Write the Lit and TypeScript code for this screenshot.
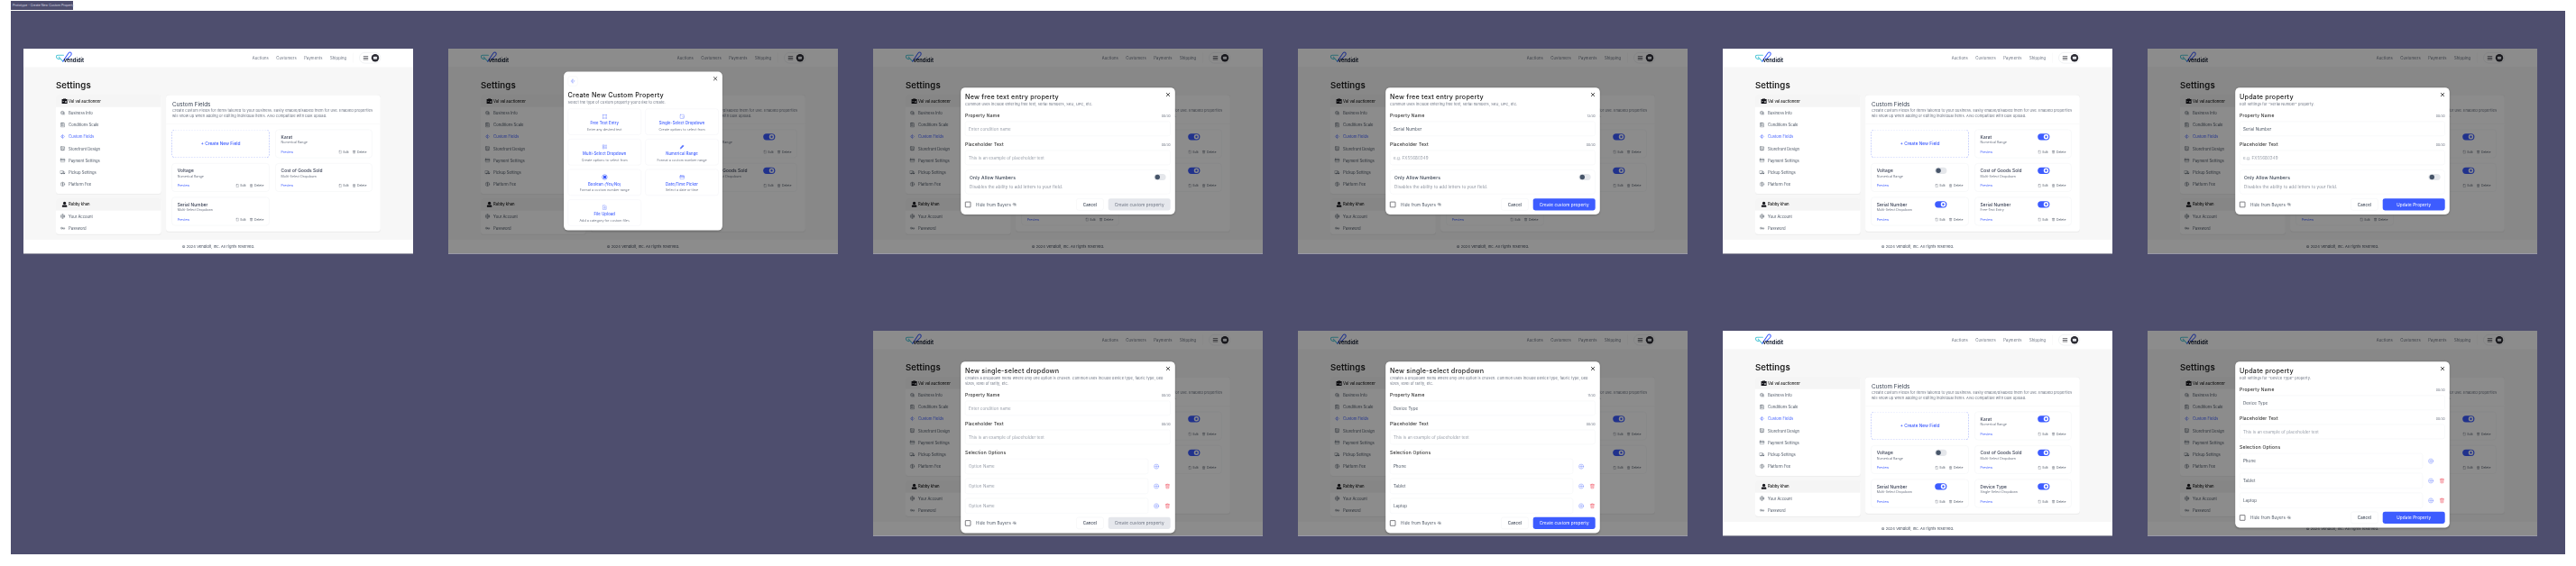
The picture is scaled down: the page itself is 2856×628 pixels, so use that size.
import { LitElement, css, html, nothing, svg } from "lit";
import { customElement } from "lit/decorators.js";

// Each board is laid out at its 1440 design size, then scaled down onto the canvas.
const SCALE = 0.3;

type Tile = { name: string; kind: string; on?: boolean };
type Form = {
  title: string;
  sub: string;
  name: string;
  count: string;
  hint: string;
  options?: string[];
  ready?: boolean;
  action: string;
};
type Board = { x: number; y: number; toggles: boolean; extra?: Tile; picker?: boolean; form?: Form };

const TEXT_SUB = "Common uses include entering free text, serial numbers, SKU, UPC, etc.";
const DROP_SUB =
  "Creates a dropdown menu where only one option is chosen. Common uses include device type, fabric type, bed sizes, level of rarity, etc.";
const SAMPLE = "This is an example of placeholder text";
const SERIAL_HINT = "e.g. FX55680349";
const BLANK_OPTIONS = ["", "", ""];
const DEVICE_OPTIONS = ["Phone", "Tablet", "Laptop"];

const BOARDS: Board[] = [
  { x: 14, y: 42, toggles: false },
  { x: 485, y: 42, toggles: true, picker: true },
  {
    x: 956, y: 42, toggles: true,
    form: { title: "New free text entry property", sub: TEXT_SUB, name: "", count: "00/30", hint: SAMPLE, action: "Create custom property" },
  },
  {
    x: 1427, y: 42, toggles: true,
    form: { title: "New free text entry property", sub: TEXT_SUB, name: "Serial Number", count: "13/30", hint: SERIAL_HINT, ready: true, action: "Create custom property" },
  },
  { x: 1898, y: 42, toggles: true, extra: { name: "Serial Number", kind: "Free-Text Entry", on: true } },
  {
    x: 2369, y: 42, toggles: true,
    form: { title: "Update property", sub: 'Edit settings for "Serial Number" property.', name: "Serial Number", count: "00/30", hint: SERIAL_HINT, ready: true, action: "Update Property" },
  },
  {
    x: 956, y: 355, toggles: true,
    form: { title: "New single-select dropdown", sub: DROP_SUB, name: "", count: "00/30", hint: SAMPLE, options: BLANK_OPTIONS, action: "Create custom property" },
  },
  {
    x: 1427, y: 355, toggles: true,
    form: { title: "New single-select dropdown", sub: DROP_SUB, name: "Device Type", count: "11/30", hint: SAMPLE, options: DEVICE_OPTIONS, ready: true, action: "Create custom property" },
  },
  { x: 1898, y: 355, toggles: true, extra: { name: "Device Type", kind: "Single-Select Dropdown", on: true } },
  {
    x: 2369, y: 355, toggles: true,
    form: { title: "Update property", sub: 'Edit settings for "Device Type" property.', name: "Device Type", count: "00/30", hint: SAMPLE, options: DEVICE_OPTIONS, ready: true, action: "Update Property" },
  },
];

const TILES: Tile[] = [
  { name: "Karat", kind: "Numerical Range", on: true },
  { name: "Voltage", kind: "Numerical Range", on: false },
  { name: "Cost of Goods Sold", kind: "Multi-Select Dropdown", on: true },
  { name: "Serial Number", kind: "Multi-Select Dropdown", on: true },
];

const ICONS: Record<string, unknown> = {
  info: svg`<circle cx="11" cy="11" r="7.5"/><path d="M6 9c3-3 8-3 11 0M8 13h9l4 4-3 3-5-5"/>`,
  scale: svg`<rect x="4" y="4" width="16" height="18" rx="1.5"/><path d="M9 2h6v4H9zM8 11h3v3H8zM13 12h4M8 17h3M13 17h4"/>`,
  fields: svg`<path d="M12 3v18M8.5 7 3.5 12l5 5zM15.5 7l5 5-5 5"/>`,
  store: svg`<rect x="3.5" y="4" width="17" height="16" rx="2"/><path d="M3.5 9h17M8 13h8v7H8z"/>`,
  pay: svg`<rect x="2.5" y="5" width="19" height="14" rx="2"/><path d="M2.5 10h19" stroke-width="3"/>`,
  pickup: svg`<path d="M2 6h13v11H2zM15 10h4l3 3v4h-7z"/><circle cx="7" cy="18" r="2"/><circle cx="18" cy="18" r="2"/>`,
  fee: svg`<circle cx="12" cy="12" r="9"/><path d="M15 9c-1-2-6-2-6 .5s6 2.500 6 5-5 2.500-6 .5M12 5v14"/>`,
  account: svg`<circle cx="12" cy="12" r="9"/><circle cx="12" cy="12" r="3.500"/><path d="M12 3v5M12 16v5M3 12h5M16 12h5"/>`,
  key: svg`<circle cx="7" cy="12" r="4"/><path d="M11 11h11v3h-3v2h-3v-2h-5"/>`,
  edit: svg`<path d="M7 3h11v18H5V5zM9 3v4H5"/>`,
  trash: svg`<path d="M4 6h16M9 6V3h6v3M6 6l1 15h10l1-15M10 10v7M14 10v7"/>`,
  plus: svg`<circle cx="12" cy="12" r="9.500"/><path d="M12 6v12M6 12h12"/>`,
  eyeoff: svg`<path d="M2 12s4-7 10-7 10 7 10 7-4 7-10 7-10-7-10-7zM4 4l16 16"/><circle cx="12" cy="12" r="3"/>`,
  close: svg`<path d="M5 5l14 14M19 5 5 19" stroke-width="3"/>`,
  text: svg`<path d="M5 3v18M3 5h18M19 3v18M3 19h18"/>`,
  select: svg`<rect x="3.500" y="3.500" width="17" height="17" rx="2"/><path d="M14 13l3 3 3-3"/>`,
  multi: svg`<path d="M4 4h6v6H4zM4 14h6v6H4zM14 5h7M14 9h7M14 15h7M14 19h7"/>`,
  range: svg`<path d="M4 20l1-5L16 4l4 4L9 19zM13 7l4 4" fill="currentColor"/>`,
  date: svg`<rect x="3" y="4" width="18" height="17" rx="3"/><path d="M3 10h18" stroke-width="4"/>`,
  file: svg`<path d="M5 3h10l4 4v14H5zM12 17v-7M9 13l3-3 3 3"/>`,
};

const PICKER = [
  ["text", "Free Text Entry", "Enter any desired text"],
  ["select", "Single-Select Dropdown", "Create options to select from"],
  ["multi", "Multi-Select Dropdown", "Create options to select from"],
  ["range", "Numerical Range", "Format a custom number range"],
  ["bool", "Boolean (Yes/No)", "Format a custom number range"],
  ["date", "Date/Time Picker", "Select a date or time"],
  ["file", "File Upload", "Add a category for custom files"],
];

const icon = (name: string, cls = "") =>
  html`<svg class="ico ${cls}" viewBox="0 0 24 24">${ICONS[name]}</svg>`;

@customElement("app-root")
export class AppRoot extends LitElement {
  static styles = css`
    :host {
      display: block;
      width: 2856px;
      height: 628px;
      background: #fff;
      overflow: hidden;
      font-family: Inter, "Noto Sans", sans-serif;
    }
    .tag {
      width: 69px;
      height: 10px;
      margin: 1px 0 1px 12px;
      background: #4e4e6e;
      color: #d8d8e4;
      font-size: 3.500px;
      line-height: 10px;
      white-space: nowrap;
      padding-left: 2px;
      box-sizing: border-box;
    }
    .canvas {
      position: relative;
      height: 603px;
      margin: 0 12px;
      background: #4e4e6e;
    }
    .board {
      position: absolute;
      width: 432px;
      height: 227px;
      overflow: hidden;
      box-shadow: 0 1px 0 #9a9aa8;
      filter: blur(0.3px);
    }
    .page {
      width: 1440px;
      height: 757px;
      display: flex;
      flex-direction: column;
      position: relative;
      background: #f7f7f7;
      transform: scale(${SCALE});
      transform-origin: 0 0;
      color: #374151;
      font-size: 14px;
    }
    .ico {
      width: 20px;
      height: 20px;
      flex: none;
      fill: none;
      stroke: currentColor;
      stroke-width: 1.6;
      stroke-linejoin: round;
      stroke-linecap: round;
    }

    header {
      height: 68px;
      flex: none;
      background: #fff;
      padding: 0 120px;
      display: flex;
      align-items: center;
    }
    .logo {
      position: relative;
      width: 113px;
      height: 46px;
      margin-right: auto;
    }
    .logo svg {
      position: absolute;
      left: 0;
      top: -2px;
    }
    .logo b {
      position: absolute;
      left: 29px;
      top: 18px;
      color: #111a2e;
      font-size: 18.500px;
      line-height: 28px;
      font-weight: 700;
      letter-spacing: 0.2px;
    }
    nav {
      display: flex;
      gap: 28px;
      color: #6b7280;
      letter-spacing: 0.35px;
    }
    .rule {
      width: 1px;
      height: 36px;
      margin: 0 21px 0 25px;
      background: #efefef;
    }
    .pill {
      width: 79px;
      height: 40px;
      box-sizing: border-box;
      border: 1px solid #d1d5db;
      border-radius: 20px;
      display: flex;
      align-items: center;
      justify-content: space-between;
      padding: 0 5px 0 14px;
    }
    .burger {
      width: 18px;
      height: 14px;
      box-sizing: border-box;
      border: solid #2b2b33;
      border-width: 2.500px 0;
      background: linear-gradient(#2b2b33, #2b2b33) center/100% 2.500px no-repeat;
    }
    .avatar {
      width: 28px;
      height: 28px;
      border-radius: 50%;
      background: #2b2b33;
      display: flex;
      align-items: center;
      justify-content: center;
    }
    .avatar i {
      width: 14px;
      height: 10px;
      border-radius: 3px;
      background: #e5e7eb;
    }

    main {
      flex: 1;
      padding: 45px 120px 0;
    }
    h1 {
      margin: 0 0 9px;
      font-size: 32px;
      line-height: 48px;
      font-weight: 600;
      color: #222;
      letter-spacing: 0.3px;
    }
    .cols {
      display: grid;
      grid-template-columns: 389px 792px;
      gap: 18px;
      align-items: start;
    }
    .side {
      display: flex;
      flex-direction: column;
      gap: 16px;
    }
    .menu {
      background: #fff;
      border-radius: 12px;
      overflow: hidden;
      box-shadow: 0 1px 3px #0000000a;
      padding-bottom: 14px;
    }
    .menu.short {
      padding-bottom: 0;
    }
    .who {
      height: 46px;
      background: #f5f5f5;
      display: flex;
      align-items: center;
      padding-left: 20px;
      gap: 3px;
      color: #222;
      font-weight: 500;
    }
    .who svg {
      width: 24px;
      height: 24px;
      flex: none;
      fill: #16161c;
    }
    .item {
      height: 43.800px;
      display: flex;
      align-items: center;
      gap: 12px;
      padding-left: 15px;
      color: #4b5563;
    }
    .item.on {
      color: #3d5cff;
    }

    .panel {
      margin-top: 2px;
      height: 504px;
      background: #fff;
      border-radius: 12px;
      box-shadow: 0 1px 3px #0000000a;
    }
    .intro {
      height: 106px;
      box-sizing: border-box;
      padding: 21px 12px 0 23px;
      border-bottom: 1px solid #eeeeee;
    }
    .intro h2 {
      margin: 0;
      font-size: 21px;
      line-height: 26px;
      font-weight: 400;
      color: #374151;
    }
    .intro p {
      margin: 0;
      font-size: 13.500px;
      line-height: 20px;
      color: #6b7280;
      letter-spacing: 0.2px;
    }
    .tiles {
      display: grid;
      grid-template-columns: 361px 358px;
      grid-auto-rows: 105px;
      gap: 20px 22px;
      padding: 21px 0 0 21px;
    }
    .tile {
      box-sizing: border-box;
      border: 1.500px solid #e7e9ee;
      border-radius: 12px;
      padding: 14px 20px 14px 20px;
      display: grid;
      grid-template-columns: 1fr auto;
      grid-template-rows: 24px 19px 1fr;
    }
    .tile h3 {
      margin: 0;
      font-size: 16px;
      line-height: 24px;
      font-weight: 500;
      color: #3b4256;
      letter-spacing: 0.3px;
    }
    .tile small {
      grid-column: 1 / 3;
      font-size: 12px;
      line-height: 18px;
      color: #6b7280;
    }
    .make {
      border: 2px dashed #a9b6fb;
      display: flex;
      align-items: center;
      justify-content: center;
      color: #3d5cff;
      font-size: 16px;
      font-weight: 500;
    }
    .link {
      color: #3d5cff;
      font-size: 12px;
      align-self: end;
    }
    .acts {
      display: flex;
      justify-content: flex-end;
      gap: 13px;
      font-size: 11.500px;
      color: #4b5563;
      align-self: end;
    }
    .acts span {
      display: flex;
      align-items: center;
      gap: 4px;
    }
    .acts .ico {
      width: 14px;
      height: 14px;
    }
    .switch {
      width: 44px;
      height: 24px;
      box-sizing: border-box;
      border-radius: 12px;
      background: #e5e7eb;
      padding: 3px 4px;
      display: flex;
    }
    .switch i {
      width: 18px;
      height: 18px;
      border-radius: 50%;
      background: #475569;
    }
    .switch.on {
      background: #3d5cff;
      justify-content: flex-end;
    }
    .switch.on i {
      background: #fff;
      box-shadow: inset 0 0 0 5px #fff, inset 0 0 0 9px #3d5cff;
    }

    footer {
      height: 50px;
      flex: none;
      background: #fff;
      display: flex;
      align-items: center;
      justify-content: center;
      font-size: 13.500px;
      color: #374151;
      letter-spacing: 0.2px;
    }

    .shade {
      position: absolute;
      inset: 0;
      background: #00000073;
      display: flex;
      justify-content: center;
      align-items: center;
    }
    .shade.low {
      align-items: flex-start;
      padding-top: 114px;
    }
    .modal {
      position: relative;
      width: 792px;
      box-sizing: border-box;
      padding: 15px 17px 16px 16px;
      background: #fff;
      border-radius: 16px;
      box-shadow: 0 2px 6px #00000033;
    }
    .modal.pick {
      width: 586px;
      padding: 17px 14px 17px 15px;
    }
    .shut {
      position: absolute;
      top: 16px;
      right: 16px;
      color: #222;
    }
    .badge {
      width: 36px;
      height: 36px;
      box-sizing: border-box;
      border: 1px solid #e7e9ee;
      border-radius: 8px;
      color: #6e86ff;
      display: flex;
      align-items: center;
      justify-content: center;
      margin-bottom: 15px;
    }
    .modal h2 {
      margin: 0;
      font-size: 24px;
      line-height: 36px;
      font-weight: 500;
      color: #222;
      letter-spacing: 0.7px;
    }
    .modal .lead {
      margin: 0 0 19px;
      font-size: 13px;
      line-height: 20px;
      color: #6b7280;
      letter-spacing: 0.4px;
    }
    .pick .lead {
      margin-bottom: 13px;
    }
    .choices {
      display: grid;
      grid-template-columns: 271px 271px;
      grid-auto-rows: 97px;
      gap: 15px;
    }
    .choice {
      box-sizing: border-box;
      padding-top: 8px;
      border: 1px solid #e9ebf0;
      border-radius: 10px;
      display: flex;
      flex-direction: column;
      align-items: center;
      justify-content: center;
      text-align: center;
      color: #3d5cff;
      font-weight: 500;
      font-size: 14px;
      line-height: 20px;
      letter-spacing: 0.3px;
    }
    .choice small {
      margin-top: 3px;
      color: #6b7280;
      font-weight: 400;
      font-size: 12px;
      letter-spacing: 0.2px;
    }
    .choice .ico {
      margin-bottom: 5px;
      color: #5a75ff;
    }
    .dot {
      width: 20px;
      height: 20px;
      box-sizing: border-box;
      margin-bottom: 5px;
      border-radius: 50%;
      border: 2px solid #3d5cff;
      background: radial-gradient(#3d5cff 50%, #fff 54%);
    }
    .field {
      margin-bottom: 18px;
    }
    .row {
      display: flex;
      align-items: center;
      justify-content: space-between;
      height: 24px;
      margin-bottom: 11px;
      color: #333;
      font-size: 16.500px;
      font-weight: 500;
      letter-spacing: 0.7px;
    }
    .row small {
      margin-top: 7px;
      font-size: 11.500px;
      font-weight: 400;
      color: #6b7280;
      letter-spacing: 0;
    }
    input {
      display: block;
      width: 100%;
      height: 54px;
      box-sizing: border-box;
      padding: 0 12px;
      border: 1px solid #eceef2;
      border-radius: 8px;
      font: inherit;
      font-size: 15px;
      color: #4b5563;
      letter-spacing: 0.3px;
      outline: none;
    }
    input::placeholder {
      color: #9aa0ab;
    }
    .opts {
      display: flex;
      flex-direction: column;
      gap: 16px;
      margin-bottom: 14px;
    }
    .opt {
      display: flex;
      align-items: center;
      gap: 19px;
    }
    .opt input {
      width: 678px;
      height: 57px;
    }
    .opt .ico {
      width: 22px;
      height: 22px;
      color: #6e86ff;
    }
    .opt .ico.red {
      color: #ef4456;
    }
    .opt .gap {
      width: 22px;
    }
    .numbers {
      height: 90px;
      box-sizing: border-box;
      margin-bottom: 17px;
      padding: 18px 16px 16px;
      border: 1.500px solid #eceef2;
      border-radius: 12px;
      display: grid;
      grid-template-columns: 1fr auto;
      align-content: space-between;
      font-size: 16.500px;
      font-weight: 500;
      letter-spacing: 0.5px;
      color: #374151;
    }
    .numbers .switch {
      margin-top: -4px;
    }
    .numbers p {
      grid-column: 1 / 3;
      margin: 0;
      font-size: 15px;
      font-weight: 400;
      color: #8a909c;
      letter-spacing: 0.4px;
    }
    .foot {
      display: flex;
      align-items: center;
      height: 42px;
      font-size: 15px;
      letter-spacing: 0.4px;
      color: #4b5563;
    }
    .box {
      width: 21px;
      height: 21px;
      box-sizing: border-box;
      margin-right: 19px;
      border: 2px solid #2b2b33;
      border-radius: 2px;
    }
    .foot .ico {
      width: 16px;
      height: 16px;
      margin: 0 auto 0 5px;
    }
    .btn {
      height: 44px;
      box-sizing: border-box;
      border-radius: 8px;
      display: flex;
      align-items: center;
      justify-content: center;
      font-size: 15.500px;
      letter-spacing: 0.4px;
    }
    .cancel {
      width: 101px;
      margin-right: 17px;
      background: #fff;
      border: 1px solid #e7e9ee;
      color: #374151;
      font-weight: 500;
      font-size: 14.500px;
    }
    .go {
      width: 230px;
      background: #e5e7ec;
      color: #6b7280;
    }
    .go.ready {
      background: #3d5cff;
      color: #fff;
    }
  `;

  private renderSwitch(on: boolean) {
    return html`<div class="switch ${on ? "on" : ""}"><i></i></div>`;
  }

  private renderTile(tile: Tile, toggles: boolean) {
    return html`<div class="tile">
      <h3>${tile.name}</h3>
      ${toggles ? this.renderSwitch(!!tile.on) : html`<span></span>`}
      <small>${tile.kind}</small>
      <span class="link">Preview</span>
      <div class="acts">
        <span>${icon("edit")}Edit</span><span>${icon("trash")}Delete</span>
      </div>
    </div>`;
  }

  private renderPage(board: Board) {
    const tiles = board.extra ? [...TILES, board.extra] : TILES;
    const menu = [
      ["info", "Business Info"],
      ["scale", "Conditions Scale"],
      ["fields", "Custom Fields"],
      ["store", "Storefront Design"],
      ["pay", "Payment Settings"],
      ["pickup", "Pickup Settings"],
      ["fee", "Platform Fee"],
    ];
    return html`
      <header>
        <div class="logo">
          <svg width="60" height="44" viewBox="0 0 60 44" fill="none" stroke-width="3.500" stroke-linecap="round" stroke-linejoin="round">
            <path d="M28 15H8C1 15 -1 22 4 26l4 3c4 2 7-1 5-5l-2-2M11 22l15 16" stroke="#56c9d8"/>
            <path d="M26 38 47 7c3-4 9-3 10 1 1 3 0 5-2 8L41 30" stroke="#3d5cff"/>
          </svg>
          <b>vendidit</b>
        </div>
        <nav><span>Auctions</span><span>Customers</span><span>Payments</span><span>Shipping</span></nav>
        <div class="rule"></div>
        <div class="pill">
          <div class="burger"></div>
          <div class="avatar"><i></i></div>
        </div>
      </header>
      <main>
        <h1>Settings</h1>
        <div class="cols">
          <div class="side">
            <div class="menu">
              <div class="who">
                <svg viewBox="0 0 24 24"><path d="M8 6V3h8v3h6v16H2V6zm2 0h4V5h-4zM5 13v2h5v-2zm9 0v5h5v-5z"/></svg>
                Val val auctioneer
              </div>
              ${menu.map(
                ([name, label]) =>
                  html`<div class="item ${label === "Custom Fields" ? "on" : ""}">${icon(name)}${label}</div>`
              )}
            </div>
            <div class="menu short">
              <div class="who">
                <svg viewBox="0 0 24 24"><circle cx="12" cy="7.500" r="5.500"/><path d="M6 14h12c2 0 3 2 3 4v4H3v-4c0-2 1-4 3-4z"/></svg>
                Rabby khan
              </div>
              <div class="item">${icon("account")}Your Account</div>
              <div class="item">${icon("key")}Password</div>
            </div>
          </div>
          <section class="panel">
            <div class="intro">
              <h2>Custom Fields</h2>
              <p>
                Create custom Fields for Items tailored to your business. Easily enable/disabled them for use. Enabled
                properties will show up when adding or editing individual items. Also compatible with bulk upload.
              </p>
            </div>
            <div class="tiles">
              <div class="tile make">+ Create New Field</div>
              ${tiles.map((t) => this.renderTile(t, board.toggles))}
            </div>
          </section>
        </div>
      </main>
      <footer>© 2024 Vendidit, Inc. All rights reserved.</footer>
    `;
  }

  private renderPicker() {
    return html`<div class="shade">
      <div class="modal pick">
        <span class="shut">${icon("close")}</span>
        <div class="badge">${icon("fields")}</div>
        <h2>Create New Custom Property</h2>
        <p class="lead">Select the type of custom property you'd like to create.</p>
        <div class="choices">
          ${PICKER.map(
            ([name, title, sub]) => html`<div class="choice">
              ${name === "bool" ? html`<div class="dot"></div>` : icon(name)}
              ${title}<small>${sub}</small>
            </div>`
          )}
        </div>
      </div>
    </div>`;
  }

  private renderForm(form: Form, low: boolean) {
    return html`<div class="shade ${low ? "low" : ""}">
      <div class="modal">
        <span class="shut">${icon("close")}</span>
        <h2>${form.title}</h2>
        <p class="lead">${form.sub}</p>
        <div class="field">
          <div class="row">Property Name<small>${form.count}</small></div>
          <input placeholder="Enter condition name" value=${form.name} />
        </div>
        <div class="field">
          <div class="row">Placeholder Text<small>00/30</small></div>
          <input placeholder=${form.hint} />
        </div>
        ${form.options
          ? html`<div class="row">Selection Options</div>
              <div class="opts">
                ${form.options.map(
                  (value, i) => html`<div class="opt">
                    <input placeholder="Option Name" value=${value} />
                    ${icon("plus")}
                    ${i ? icon("trash", "red") : html`<span class="gap"></span>`}
                  </div>`
                )}
              </div>`
          : html`<div class="numbers">
              Only Allow Numbers ${this.renderSwitch(false)}
              <p>Disables the ability to add letters to your field.</p>
            </div>`}
        <div class="foot">
          <div class="box"></div>
          Hide from Buyers ${icon("eyeoff")}
          <div class="btn cancel">Cancel</div>
          <div class="btn go ${form.ready ? "ready" : ""}">${form.action}</div>
        </div>
      </div>
    </div>`;
  }

  render() {
    return html`
      <div class="tag">Prototype - Create New Custom Property</div>
      <div class="canvas">
        ${BOARDS.map(
          (b) => html`<div class="board" style="left:${b.x}px;top:${b.y}px">
            <div class="page">
              ${this.renderPage(b)}
              ${b.picker ? this.renderPicker() : nothing}
              ${b.form ? this.renderForm(b.form, b.y > 200) : nothing}
            </div>
          </div>`
        )}
      </div>
    `;
  }
}
